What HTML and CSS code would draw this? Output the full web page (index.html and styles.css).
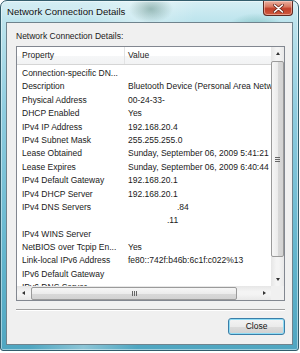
FILE: index.html
```html
<!DOCTYPE html>
<html>
<head>
<meta charset="utf-8">
<title>Network Connection Details</title>
<link rel="stylesheet" href="styles.css">
</head>
<body>

<div class="window">
	<div class="titlebar">
		<span class="title">Network Connection Details</span>
		<div class="closeBox">
			<svg width="11" height="9" viewBox="0 0 11 9">
				<path d="M1.5 1 L9.5 8 M9.5 1 L1.5 8" stroke="#6b2a1f" stroke-width="3" stroke-linecap="round"/>
				<path d="M1.5 1 L9.5 8 M9.5 1 L1.5 8" stroke="#ffffff" stroke-width="1.6" stroke-linecap="round"/>
			</svg>
		</div>
	</div>

	<div class="client">
		<div class="caption">Network Connection Details:</div>

		<div class="list">
			<div class="listMain">
				<div class="grid">
					<div class="header">
						<div class="hcell">Property</div>
						<div class="hcell valueHead">Value</div>
					</div>
					<div class="rows">
						<div class="row"><span class="prop">Connection-specific DN...</span><span class="val"></span></div>
						<div class="row"><span class="prop">Description</span><span class="val">Bluetooth Device (Personal Area Netw</span></div>
						<div class="row"><span class="prop">Physical Address</span><span class="val">00-24-33-</span></div>
						<div class="row"><span class="prop">DHCP Enabled</span><span class="val">Yes</span></div>
						<div class="row"><span class="prop">IPv4 IP Address</span><span class="val">192.168.20.4</span></div>
						<div class="row"><span class="prop">IPv4 Subnet Mask</span><span class="val">255.255.255.0</span></div>
						<div class="row"><span class="prop">Lease Obtained</span><span class="val">Sunday, September 06, 2009 5:41:21</span></div>
						<div class="row"><span class="prop">Lease Expires</span><span class="val">Sunday, September 06, 2009 6:40:44</span></div>
						<div class="row"><span class="prop">IPv4 Default Gateway</span><span class="val">192.168.20.1</span></div>
						<div class="row"><span class="prop">IPv4 DHCP Server</span><span class="val">192.168.20.1</span></div>
						<div class="row"><span class="prop">IPv4 DNS Servers</span><span class="val dns1">.84</span></div>
						<div class="row"><span class="prop"></span><span class="val dns2">.11</span></div>
						<div class="row"><span class="prop">IPv4 WINS Server</span><span class="val"></span></div>
						<div class="row"><span class="prop">NetBIOS over Tcpip En...</span><span class="val">Yes</span></div>
						<div class="row"><span class="prop">Link-local IPv6 Address</span><span class="val">fe80::742f:b46b:6c1f:c022%13</span></div>
						<div class="row"><span class="prop">IPv6 Default Gateway</span><span class="val"></span></div>
						<div class="row"><span class="prop">IPv6 DNS Server</span><span class="val"></span></div>
					</div>
				</div>
				<div class="vscroll">
					<div class="arrowBox"><span class="tri up"></span></div>
					<div class="vtrack">
						<div class="vthumb"><span class="vgrip"></span></div>
					</div>
					<div class="arrowBox"><span class="tri down"></span></div>
				</div>
			</div>
			<div class="hbar">
				<div class="hscroll">
					<div class="arrowBox"><span class="tri left"></span></div>
					<div class="htrack">
						<div class="hthumb"><span class="hgrip"></span></div>
					</div>
					<div class="arrowBox"><span class="tri right"></span></div>
				</div>
				<div class="corner"></div>
			</div>
		</div>

		<div class="separator"></div>

		<div class="actions">
			<div class="button">Close</div>
		</div>
	</div>
</div>

</body>
</html>
```

FILE: styles.css
```css
html, body {
	margin: 0;
	background-color: white;
}
body {
	font-family: "Liberation Sans", Arial, sans-serif;
	font-size: 8.5px;
	color: #1a1a1a;
}
.window {
	box-sizing: border-box;
	width: 299px;
	height: 351px;
	border: 1px solid #335d6c;
	border-radius: 7px 7px 3px 3px;
	overflow: hidden;
	background:
		radial-gradient(ellipse 22px 14px at 150px 8px, rgba(70,120,110,0.45), rgba(70,120,110,0)),
		radial-gradient(ellipse 30px 18px at 255px 30px, rgba(60,150,140,0.5), rgba(60,150,140,0)),
		linear-gradient(100deg, rgba(255,255,255,0) 25%, rgba(255,255,255,0.35) 40%, rgba(255,255,255,0) 55%),
		linear-gradient(180deg, #d6eef4 0, #bde4ed 20px, #8fcde0 110px, #62b5cd 260px, #4fa6c1 349px);
	box-shadow: inset 0 0 0 1px rgba(255,255,255,0.45);
}
.titlebar {
	display: flex;
	align-items: flex-start;
	height: 21px;
}
.title {
	font-size: 9.6px;
	color: #111;
	padding: 5px 0 0 6px;
	text-shadow: 0 0 6px rgba(255,255,255,0.9);
}
.closeBox {
	margin-left: auto;
	margin-right: 5px;
	box-sizing: border-box;
	width: 30px;
	height: 15px;
	border: 1px solid #5e2a22;
	border-top: none;
	border-radius: 0 0 4px 4px;
	background: linear-gradient(180deg, #eab1a2 0, #d97a62 40%, #c2402a 55%, #cf5a3f 100%);
	box-shadow: inset 0 0 0 1px rgba(255,220,210,0.5);
	display: flex;
	align-items: center;
	justify-content: center;
}
.client {
	box-sizing: border-box;
	width: 287px;
	height: 323px;
	margin-left: 5px;
	border: 1px solid #6f838d;
	background-color: #f0f0f0;
	padding: 7px 7px 0 9px;
}
.caption {
	line-height: 12px;
	height: 12px;
	margin-bottom: 4px;
}
.list {
	box-sizing: border-box;
	height: 255px;
	border: 1px solid #828790;
	background-color: white;
	display: flex;
	flex-direction: column;
}
.listMain {
	flex: 1;
	display: flex;
	min-height: 0;
}
.grid {
	flex: 1;
	overflow: hidden;
	min-width: 0;
}
.header {
	display: grid;
	grid-template-columns: 107px 1fr;
	height: 18px;
	background: linear-gradient(180deg, #ffffff 0, #ffffff 50%, #f6f7f8 51%, #f2f3f4 100%);
	border-bottom: 1px solid #d5d5d5;
	box-sizing: border-box;
}
.hcell {
	line-height: 17px;
	padding-left: 5px;
	color: #222;
}
.valueHead {
	border-left: 1px solid #e2e3e4;
	padding-left: 3px;
}
.rows {
	padding-top: 2px;
}
.row {
	display: grid;
	grid-template-columns: 107px 1fr;
	line-height: 13.4px;
	height: 13.4px;
	white-space: nowrap;
}
.prop {
	padding-left: 5px;
	overflow: hidden;
}
.val {
	padding-left: 4px;
}
.dns1 {
	padding-left: 53px;
}
.dns2 {
	padding-left: 43px;
}
.vscroll {
	width: 13px;
	display: flex;
	flex-direction: column;
	background: linear-gradient(90deg, #e6e6e6, #f4f4f4 40%, #f4f4f4 60%, #e8e8e8);
}
.arrowBox {
	width: 13px;
	height: 13px;
	display: flex;
	align-items: center;
	justify-content: center;
	flex: none;
}
.tri {
	width: 0;
	height: 0;
}
.tri.up {
	border-left: 2.5px solid transparent;
	border-right: 2.5px solid transparent;
	border-bottom: 3px solid #333;
}
.tri.down {
	border-left: 2.5px solid transparent;
	border-right: 2.5px solid transparent;
	border-top: 3px solid #333;
}
.tri.left {
	border-top: 2.5px solid transparent;
	border-bottom: 2.5px solid transparent;
	border-right: 3px solid #333;
}
.tri.right {
	border-top: 2.5px solid transparent;
	border-bottom: 2.5px solid transparent;
	border-left: 3px solid #333;
}
.vtrack {
	flex: 1;
	padding: 1px 0;
	display: flex;
}
.vthumb {
	flex: none;
	box-sizing: border-box;
	width: 13px;
	height: 196px;
	border: 1px solid #9a9a9a;
	border-radius: 2px;
	background: linear-gradient(90deg, #f6f6f6 0, #ececec 50%, #d9d9d9 51%, #d2d2d2 100%);
	display: flex;
	align-items: center;
	justify-content: center;
}
.vgrip {
	width: 5px;
	height: 5px;
	background: repeating-linear-gradient(180deg, #666 0, #666 1px, transparent 1px, transparent 2px);
}
.hbar {
	display: flex;
	height: 14px;
}
.hscroll {
	flex: 1;
	display: flex;
	align-items: center;
	background: linear-gradient(180deg, #e6e6e6, #f4f4f4 40%, #f4f4f4 60%, #e8e8e8);
}
.htrack {
	flex: 1;
	padding: 0 1px;
	display: flex;
}
.hthumb {
	box-sizing: border-box;
	width: 206px;
	height: 13px;
	border: 1px solid #9a9a9a;
	border-radius: 2px;
	background: linear-gradient(180deg, #f6f6f6 0, #ececec 50%, #d9d9d9 51%, #d2d2d2 100%);
	display: flex;
	align-items: center;
	justify-content: center;
}
.hgrip {
	width: 5px;
	height: 5px;
	background: repeating-linear-gradient(90deg, #666 0, #666 1px, transparent 1px, transparent 2px);
}
.corner {
	width: 13px;
	background-color: #f0f0f0;
}
.separator {
	margin-top: 8px;
	height: 1px;
	border-top: 1px solid #a0a0a0;
	background-color: white;
}
.actions {
	display: flex;
	justify-content: flex-end;
	margin-top: 7px;
}
.button {
	box-sizing: border-box;
	width: 57px;
	height: 17px;
	line-height: 15px;
	text-align: center;
	border: 1px solid #3a7ea8;
	border-radius: 3px;
	background: linear-gradient(180deg, #f4f4f4 0, #ebebeb 50%, #dcdcdc 51%, #d0d0d0 100%);
	box-shadow: inset 0 0 0 1px #8fdcf5;
	color: #111;
}
```
